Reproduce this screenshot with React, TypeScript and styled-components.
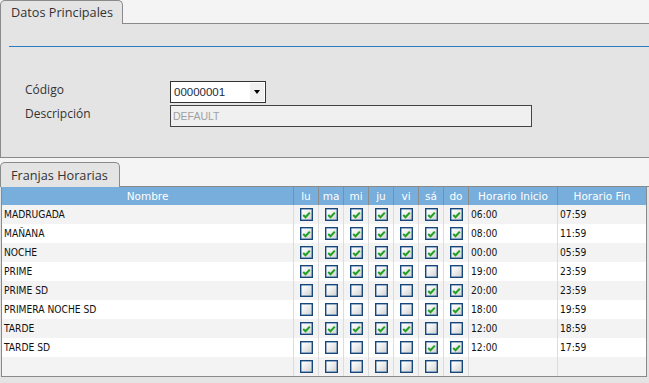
import React from 'react';
import styled, { createGlobalStyle } from 'styled-components';

const GlobalStyle = createGlobalStyle`
  html, body { margin: 0; padding: 0; background: #f4f4f4; overflow: hidden; }
  #root { width: 649px; height: 383px; }
`;

const Page = styled.div`
  display: flex;
  flex-direction: column;
  width: 649px;
  height: 383px;
  background: #f4f4f4;
  overflow: hidden;
`;

const TabStrip = styled.div<{ $h: number; $mt?: number }>`
  display: flex;
  align-items: stretch;
  height: ${(p) => p.$h}px;
  margin-top: ${(p) => p.$mt ?? 0}px;
  flex: none;
`;

const Tab = styled.div<{ $w: number }>`
  box-sizing: border-box;
  width: ${(p) => p.$w}px;
  background: #e4e4e4;
  border: 1px solid #8a8a8a;
  border-bottom: none;
  border-radius: 5px 5px 0 0;
  padding: 0 0 1px 10px;
  display: flex;
  align-items: center;
  font: 12.7px "Open Sans", sans-serif;
  color: #333;
`;

const TabFill = styled.div`
  flex: 1;
  box-sizing: border-box;
  border-bottom: 1px solid #8a8a8a;
`;

const MainPanel = styled.div`
  box-sizing: border-box;
  height: 134px;
  flex: none;
  background: #e4e4e4;
  border-left: 1px solid #8a8a8a;
  border-bottom: 1px solid #8a8a8a;
  padding: 22px 0 0 8px;
`;

const Rule = styled.div`
  height: 1px;
  background: #2b7cc3;
`;

const Form = styled.div`
  display: grid;
  grid-template-columns: 145px auto;
  row-gap: 2px;
  margin: 34px 0 0 16px;
  align-items: center;
`;

const Label = styled.div`
  font: 12px "Open Sans", sans-serif;
  color: #333;
  padding-bottom: 5px;
`;

const Select = styled.div`
  box-sizing: border-box;
  width: 96px;
  height: 22px;
  border: 1px solid #333;
  background: #fff;
  display: flex;
  align-items: stretch;
  padding: 1px;
`;

const SelectValue = styled.div`
  flex: 1;
  display: flex;
  align-items: center;
  padding-left: 2px;
  font: 11.5px "Liberation Sans", Arial, sans-serif;
  color: #1c2a3c;
`;

const SelectButton = styled.div`
  width: 14px;
  background: #f0f0f0;
  display: flex;
  align-items: center;
  justify-content: center;
`;

const Arrow = styled.span`
  width: 0;
  height: 0;
  border-left: 3.5px solid transparent;
  border-right: 3.5px solid transparent;
  border-top: 4px solid #000;
`;

const TextInput = styled.div`
  box-sizing: border-box;
  width: 362px;
  height: 22px;
  border: 1px solid #444;
  background: #f0f0f0;
  display: flex;
  align-items: center;
  padding-left: 2px;
  font: 10.5px "Liberation Sans", Arial, sans-serif;
  color: #a0a0a0;
`;

const GridPanel = styled.div`
  flex: 1;
  background: #e4e4e4;
  padding: 0 2px 0 1px;
`;

const Grid = styled.div`
  width: 646px;
  box-sizing: border-box;
  border-left: 1px solid #8a8a8a;
  border-right: 1px solid #8a8a8a;
  border-bottom: 1px solid #8a8a8a;
`;

const COLS = '292px repeat(7, 25px) 89px 88px';

const HeaderRow = styled.div`
  display: grid;
  grid-template-columns: ${COLS};
  height: 18px;
  background: #77aedb;
`;

const HeaderCell = styled.div<{ $last?: boolean }>`
  box-sizing: border-box;
  border-right: ${(p) => (p.$last ? 'none' : '1px solid #8c8c8c')};
  display: flex;
  align-items: center;
  justify-content: center;
  font: 10.5px "DejaVu Sans", sans-serif;
  color: #fff;
  white-space: nowrap;
  overflow: hidden;
`;

const Row = styled.div<{ $alt: boolean }>`
  display: grid;
  grid-template-columns: ${COLS};
  height: 19px;
  background: ${(p) => (p.$alt ? '#ffffff' : '#f3f3f3')};
`;

const Cell = styled.div<{ $last?: boolean; $center?: boolean }>`
  box-sizing: border-box;
  border-right: ${(p) => (p.$last ? 'none' : '1px solid #dcdcdc')};
  display: flex;
  align-items: center;
  justify-content: ${(p) => (p.$center ? 'center' : 'flex-start')};
  padding-left: ${(p) => (p.$center ? 0 : 2)}px;
  font: 10.2px "DejaVu Sans Condensed", "DejaVu Sans", sans-serif;
  color: #111;
  white-space: nowrap;
  overflow: hidden;
`;

const Box = styled.span`
  box-sizing: border-box;
  width: 13px;
  height: 13px;
  border: 1px solid #17477a;
  box-shadow: inset 0 0 0 0.5px #3a6a9a;
  background: linear-gradient(135deg, #ffffff 0%, #f4f4f4 35%, #cfcfcf 100%);
  display: flex;
  align-items: center;
  justify-content: center;
`;

const Check = () => (
  <svg width="9" height="8" viewBox="0 0 9 8">
    <polyline points="1.2,4 3.5,6.3 7.8,1.6" fill="none" stroke="#22a022" strokeWidth="2" />
  </svg>
);

const Checkbox = ({ on }: { on: boolean }) => <Box>{on && <Check />}</Box>;

const days = ['lu', 'ma', 'mi', 'ju', 'vi', 'sá', 'do'];

type Franja = { name: string; days: number[]; start: string; end: string };

const ALL = [1, 1, 1, 1, 1, 1, 1];
const WEEK = [1, 1, 1, 1, 1, 0, 0];
const WKND = [0, 0, 0, 0, 0, 1, 1];

const rows: Franja[] = [
  { name: 'MADRUGADA', days: ALL, start: '06:00', end: '07:59' },
  { name: 'MAÑANA', days: ALL, start: '08:00', end: '11:59' },
  { name: 'NOCHE', days: ALL, start: '00:00', end: '05:59' },
  { name: 'PRIME', days: WEEK, start: '19:00', end: '23:59' },
  { name: 'PRIME SD', days: WKND, start: '20:00', end: '23:59' },
  { name: 'PRIMERA NOCHE SD', days: WKND, start: '18:00', end: '19:59' },
  { name: 'TARDE', days: WEEK, start: '12:00', end: '18:59' },
  { name: 'TARDE SD', days: WKND, start: '12:00', end: '17:59' },
  { name: '', days: [0, 0, 0, 0, 0, 0, 0], start: '', end: '' },
];

export default function App() {
  return (
    <Page>
      <GlobalStyle />
      <TabStrip $h={24}>
        <Tab $w={123}>Datos Principales</Tab>
        <TabFill />
      </TabStrip>
      <MainPanel>
        <Rule />
        <Form>
          <Label>Código</Label>
          <Select>
            <SelectValue>00000001</SelectValue>
            <SelectButton>
              <Arrow />
            </SelectButton>
          </Select>
          <Label>Descripción</Label>
          <TextInput>DEFAULT</TextInput>
        </Form>
      </MainPanel>
      <TabStrip $h={25} $mt={4}>
        <Tab $w={120}>Franjas Horarias</Tab>
        <TabFill />
      </TabStrip>
      <GridPanel>
        <Grid>
          <HeaderRow>
            <HeaderCell>Nombre</HeaderCell>
            {days.map((d) => (
              <HeaderCell key={d}>{d}</HeaderCell>
            ))}
            <HeaderCell>Horario Inicio</HeaderCell>
            <HeaderCell $last>Horario Fin</HeaderCell>
          </HeaderRow>
          {rows.map((r, i) => (
            <Row key={i} $alt={i % 2 === 1}>
              <Cell>{r.name}</Cell>
              {r.days.map((on, j) => (
                <Cell key={j} $center>
                  <Checkbox on={on === 1} />
                </Cell>
              ))}
              <Cell>{r.start}</Cell>
              <Cell $last>{r.end}</Cell>
            </Row>
          ))}
        </Grid>
      </GridPanel>
    </Page>
  );
}
